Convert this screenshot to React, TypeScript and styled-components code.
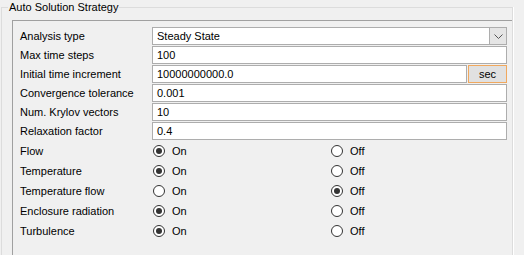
import styled, { createGlobalStyle } from "styled-components";

const GlobalStyle = createGlobalStyle`
  html, body {
    margin: 0;
    padding: 0;
    background: #f0f0f0;
    overflow: hidden;
  }
  body {
    font-family: "Liberation Sans", Arial, sans-serif;
    font-size: 11px;
    color: #000;
  }
`;

const GroupBox = styled.fieldset`
  box-sizing: border-box;
  margin: 0 0 0 1px;
  padding: 0;
  width: 512px;
  height: 255px;
  border: 1px solid #dcdcdc;
  border-bottom: none;
  box-shadow: 1px 0 0 #fff;
  min-width: 0;
`;

const Title = styled.legend`
  margin-left: 6px;
  padding: 0 1px;
  font-size: 11px;
  line-height: 14px;
  color: #000;
`;

const Panel = styled.div`
  box-sizing: border-box;
  margin: 6px 0 0 10px;
  padding: 6px 5px 0 7px;
  height: 235px;
  border-top: 1px solid #a0a0a0;
  border-left: 1px solid #a0a0a0;
`;

const FieldRow = styled.div`
  display: grid;
  grid-template-columns: 132px 1fr;
  height: 19px;
`;

const RadioRow = styled.div`
  display: grid;
  grid-template-columns: 132px 178px 1fr;
  height: 20px;
  align-items: center;
`;

const Label = styled.div`
  line-height: 18px;
  white-space: nowrap;
`;

const Box = styled.div`
  box-sizing: border-box;
  height: 18px;
  border: 1px solid #adadad;
  background: #fff;
  padding-left: 4px;
  line-height: 16px;
  display: flex;
  align-items: center;
  justify-content: space-between;
`;

const ComboArrow = styled.div`
  box-sizing: border-box;
  width: 17px;
  height: 16px;
  background: #e5e5e5;
  border-left: 1px solid #adadad;
  display: flex;
  align-items: center;
  justify-content: center;
`;

const UnitLine = styled.div`
  display: grid;
  grid-template-columns: 1fr 39px;
  gap: 1px;
`;

const UnitButton = styled.div`
  box-sizing: border-box;
  height: 18px;
  border: 1px solid #f0a85e;
  background: #e1e1e1;
  text-align: center;
  line-height: 16px;
`;

const Option = styled.label`
  display: flex;
  align-items: center;
  gap: 7px;
  padding-left: 1px;
`;

const Dot = styled.span<{ $on: boolean }>`
  box-sizing: border-box;
  width: 12px;
  height: 12px;
  border-radius: 50%;
  border: 1px solid #333;
  background: #fff;
  display: flex;
  align-items: center;
  justify-content: center;
  &::after {
    content: "";
    width: 6px;
    height: 6px;
    border-radius: 50%;
    background: ${(p) => (p.$on ? "#333" : "transparent")};
  }
`;

const fields = [
  { label: "Max time steps", value: "100" },
  { label: "Initial time increment", value: "10000000000.0", unit: "sec" },
  { label: "Convergence tolerance", value: "0.001" },
  { label: "Num. Krylov vectors", value: "10" },
  { label: "Relaxation factor", value: "0.4" },
];

const switches = [
  { label: "Flow", on: true },
  { label: "Temperature", on: true },
  { label: "Temperature flow", on: false },
  { label: "Enclosure radiation", on: true },
  { label: "Turbulence", on: true },
];

export default function App() {
  return (
    <>
      <GlobalStyle />
      <GroupBox>
        <Title>Auto Solution Strategy</Title>
        <Panel>
          <FieldRow>
            <Label>Analysis type</Label>
            <Box>
              <span>Steady State</span>
              <ComboArrow>
                <svg width="9" height="5" viewBox="0 0 9 5">
                  <path d="M0.5 0.5 L4.5 4.5 L8.5 0.5" fill="none" stroke="#555" />
                </svg>
              </ComboArrow>
            </Box>
          </FieldRow>
          {fields.map((f) => (
            <FieldRow key={f.label}>
              <Label>{f.label}</Label>
              {f.unit ? (
                <UnitLine>
                  <Box>{f.value}</Box>
                  <UnitButton>{f.unit}</UnitButton>
                </UnitLine>
              ) : (
                <Box>{f.value}</Box>
              )}
            </FieldRow>
          ))}
          {switches.map((s) => (
            <RadioRow key={s.label}>
              <Label>{s.label}</Label>
              <Option>
                <Dot $on={s.on} />
                On
              </Option>
              <Option>
                <Dot $on={!s.on} />
                Off
              </Option>
            </RadioRow>
          ))}
        </Panel>
      </GroupBox>
    </>
  );
}
